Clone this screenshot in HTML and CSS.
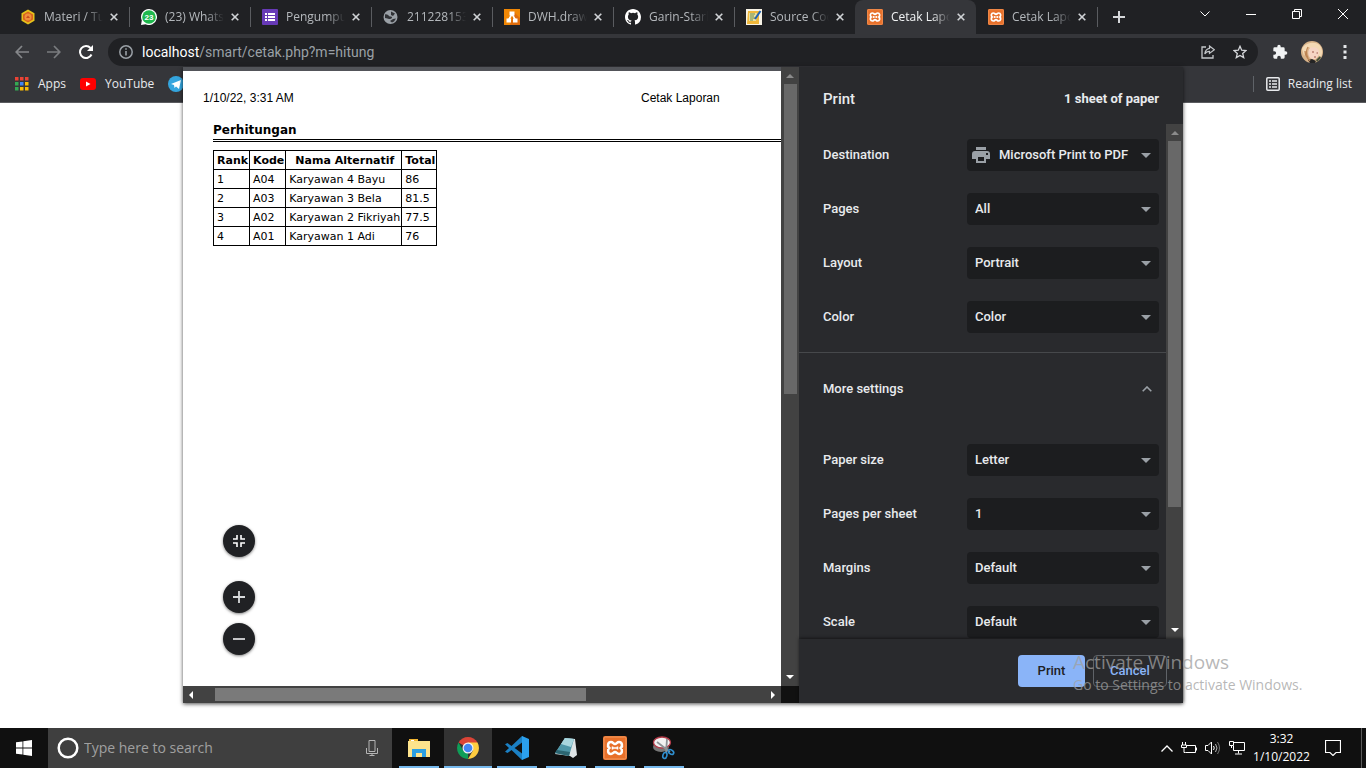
FILE: index.html
```html
<!DOCTYPE html>
<html lang="en">
<head>
<meta charset="utf-8">
<title>Cetak Laporan</title>
<link rel="stylesheet" href="styles.css">
</head>
<body>
<svg class="defs" aria-hidden="true">
  <symbol id="x" viewBox="0 0 8 8"><path d="M.7.7l6.600 6.600M7.300.7L.7 7.300" stroke="currentColor" stroke-width="1.600" fill="none"/></symbol>
  <symbol id="xampp" viewBox="0 0 24 24"><rect width="24" height="24" rx="2" fill="#e8702a"/><rect x="1" y="1" width="22" height="22" rx="1.500" fill="none" stroke="#f39a5f"/><path d="M8 6c2 0 2.500 2 4 2s2-2 4-2c3 0 4 4 1.800 6C20 14 19 18 16 18c-2 0-2.500-2-4-2s-2 2-4 2c-3 0-4-4-1.800-6C4 10 5 6 8 6z" fill="none" stroke="#fff" stroke-width="2.600"/><path d="M9.500 10.500v3M14.500 10.500v3M9.500 12h5" stroke="#fff" stroke-width="1.600"/></symbol>
  <symbol id="arrow" viewBox="0 0 10 5"><path d="M0 0h10L5 5z" fill="#9aa0a6"/></symbol>
  <symbol id="tri" viewBox="0 0 8 4"><path d="M0 4L4 0l4 4z" fill="currentColor"/></symbol>
</svg>
<div class="screen">
  <header class="tabstrip">
    <nav class="tabs" aria-label="Tabs">
      <div class="tab"><svg class="fav" viewBox="0 0 16 16"><path d="M8 .5l6.500 3.700v7.600L8 15.500l-6.500-3.700V4.200z" fill="#e6c21c"/><path d="M8 2.500l5 3v5l-5 3-5-3v-5z" fill="#d9631e"/><circle cx="8" cy="8" r="3.500" fill="#f0903c"/><path d="M6 9l2-2.500L10 9z" fill="#c84c1c"/></svg><span class="title">Materi / Tugas</span><button class="close" aria-label="Close"><svg><use href="#x"/></svg></button></div>
      <div class="tab"><svg class="fav" viewBox="0 0 16 16"><path d="M8 0a8 8 0 1 1-3.500 15.200L0 16l.8-4.500A8 8 0 0 1 8 0z" fill="#fff"/><circle cx="8" cy="8" r="6.800" fill="#1fb94e"/><text x="8" y="11" class="badge">23</text></svg><span class="title">(23) WhatsApp</span><button class="close" aria-label="Close"><svg><use href="#x"/></svg></button></div>
      <div class="tab"><svg class="fav" viewBox="0 0 16 16"><rect width="16" height="16" rx="1" fill="#673ab7"/><path d="M3 4h2v2H3zM6 4h7v2H6zM3 7h2v2H3zM6 7h7v2H6zM3 10h2v2H3zM6 10h7v2H6z" fill="#fff"/></svg><span class="title">Pengumpulan</span><button class="close" aria-label="Close"><svg><use href="#x"/></svg></button></div>
      <div class="tab"><svg class="fav" viewBox="0 0 16 16"><circle cx="7.500" cy="8" r="7" fill="#9aa0a6"/><path d="M2 5.500c2-.5 3 .5 4 1.500s3 0 3 1.500S7 10 6 10 4 9 2 9zM8 2.500l4 2-2 2.500-2-1zM7 12l3-2 3-.5-2 3-2 1z" fill="#303236"/></svg><span class="title">211228153045</span><button class="close" aria-label="Close"><svg><use href="#x"/></svg></button></div>
      <div class="tab"><svg class="fav" viewBox="0 0 16 16"><rect width="16" height="16" fill="#f08705"/><path d="M10 3l6 6v7H6z" fill="#df6c0c"/><path d="M8 5L4.500 11M8 5l3.500 6" stroke="#fff" stroke-width="1.500"/><path d="M5.500 2.500h5v4h-5zM2.500 9.500h4.500v4H2.500zM9 9.500h4.500v4H9z" fill="#fff"/></svg><span class="title">DWH.drawio</span><button class="close" aria-label="Close"><svg><use href="#x"/></svg></button></div>
      <div class="tab"><svg class="fav" viewBox="0 0 16 16"><path fill="#fff" d="M8 0C3.580 0 0 3.580 0 8c0 3.540 2.290 6.530 5.470 7.590.4.070.55-.17.55-.38v-1.490c-2.010.37-2.530-.49-2.690-.94-.09-.23-.48-.94-.82-1.130-.28-.15-.68-.52-.01-.53.63-.01 1.080.58 1.230.82.72 1.210 1.870.87 2.330.66.07-.52.28-.87.51-1.070-1.780-.2-3.640-.89-3.640-3.950 0-.87.31-1.590.82-2.150-.08-.2-.36-1.020.08-2.120 0 0 .67-.21 2.200.82a7.400 7.400 0 0 1 4 0c1.530-1.040 2.200-.82 2.200-.82.44 1.100.16 1.920.08 2.120.51.56.82 1.270.82 2.150 0 3.070-1.870 3.750-3.650 3.950.29.25.54.73.54 1.480v2.200c0 .21.15.46.55.38A8 8 0 0 0 16 8c0-4.420-3.580-8-8-8z"/></svg><span class="title">Garin-Stark/</span><button class="close" aria-label="Close"><svg><use href="#x"/></svg></button></div>
      <div class="tab"><svg class="fav" viewBox="0 0 16 16"><rect width="16" height="16" fill="#f7f3e6"/><path d="M2 2h11v13H1z" fill="#f0b83a"/><path d="M3 4h8l-1 8H3z" fill="#e8dfa0"/><path d="M4 5h5M4 7h4M4 9h5M4 11h3" stroke="#6a8c4a"/><path d="M14.500 2L9 10" stroke="#1e63b5" stroke-width="2"/></svg><span class="title">Source Code</span><button class="close" aria-label="Close"><svg><use href="#x"/></svg></button></div>
      <div class="tab active"><svg class="fav"><use href="#xampp"/></svg><span class="title">Cetak Laporan</span><button class="close" aria-label="Close"><svg><use href="#x"/></svg></button></div>
      <div class="tab"><svg class="fav"><use href="#xampp"/></svg><span class="title">Cetak Laporan</span><button class="close" aria-label="Close"><svg><use href="#x"/></svg></button></div>
    </nav>
    <button class="newtab" aria-label="New tab"><svg width="12" height="12" viewBox="0 0 12 12"><path d="M6 0v12M0 6h12" stroke="#d5d7da" stroke-width="2"/></svg></button>
    <div class="winbtns">
      <button aria-label="Search tabs"><svg width="10" height="6" viewBox="0 0 10 6"><path d="M.5.5L5 5 9.500.5" fill="none" stroke="#fff"/></svg></button>
      <button aria-label="Minimize"><svg width="10" height="10" viewBox="0 0 10 10"><path d="M0 5.500h10" stroke="#fff"/></svg></button>
      <button aria-label="Restore"><svg width="10" height="10" viewBox="0 0 10 10"><path d="M.5 2.500h7v7h-7zM2.500 2.500v-2h7v7h-2" fill="none" stroke="#fff"/></svg></button>
      <button aria-label="Close window"><svg width="10" height="10" viewBox="0 0 10 10"><path d="M0 0l10 10M10 0L0 10" stroke="#fff"/></svg></button>
    </div>
  </header>

  <div class="toolbar">
    <button class="nav" aria-label="Back"><svg width="14" height="14" viewBox="0 0 14 14"><path d="M14 7H1.500M7 1L1.200 7 7 13" fill="none" stroke="#85878a" stroke-width="1.700"/></svg></button>
    <button class="nav" aria-label="Forward"><svg width="14" height="14" viewBox="0 0 14 14"><path d="M0 7h12.500M7 1l5.800 6L7 13" fill="none" stroke="#7a7c7f" stroke-width="1.700"/></svg></button>
    <button class="nav" aria-label="Reload"><svg width="14" height="14" viewBox="0 0 14 14"><path d="M12.500 9.500A6 6 0 1 1 11.500 3" fill="none" stroke="#fff" stroke-width="2"/><path d="M14 0v6H8z" fill="#fff"/></svg></button>
    <div class="omnibox">
      <svg width="14" height="14" viewBox="0 0 14 14"><circle cx="7" cy="7" r="6.200" fill="none" stroke="#9aa0a6" stroke-width="1.500"/><path d="M7 6v4.500M7 3.300v1.500" stroke="#9aa0a6" stroke-width="1.600"/></svg>
      <div class="url" role="textbox" contenteditable="true" spellcheck="false" aria-label="Address"><b>localhost</b>/smart/cetak.php?m=hitung</div>
      <button aria-label="Share"><svg width="14" height="14" viewBox="0 0 14 14"><path d="M5 2H1v11h11v-3" fill="none" stroke="#c4c7ca" stroke-width="1.300"/><path d="M8.500 1l4.800 3.700-4.800 3.700V6.300C6.500 6.300 5 7 3.800 9c.3-3 1.700-5.200 4.700-5.700z" fill="none" stroke="#c4c7ca" stroke-width="1.200"/></svg></button>
      <button aria-label="Bookmark"><svg width="14" height="14" viewBox="0 0 14 14"><path d="M7 1.300l1.700 3.900 4.200.4-3.200 2.800 1 4.200L7 10.400l-3.700 2.200 1-4.200L1.100 5.600l4.200-.4z" fill="none" stroke="#d5d7da" stroke-width="1.300"/></svg></button>
    </div>
    <button class="ext" aria-label="Extensions"><svg width="16" height="16" viewBox="0 0 24 24"><path fill="#f1f3f4" d="M20.500 11H19V7a2 2 0 0 0-2-2h-4V3.500a2.500 2.500 0 0 0-5 0V5H4a2 2 0 0 0-2 2v3.800h1.500a2.700 2.700 0 0 1 0 5.400H2V20a2 2 0 0 0 2 2h3.800v-1.500a2.700 2.700 0 0 1 5.400 0V22H17a2 2 0 0 0 2-2v-4h1.500a2.500 2.500 0 0 0 0-5z"/></svg></button>
    <button class="avatar" aria-label="Profile"><svg width="22" height="22" viewBox="0 0 22 22"><circle cx="11" cy="11" r="11" fill="#d9b48a"/><path d="M1 8C3 1 17-1 20 6c2 4 1 9-1 12l-3-8-9-4-4 9z" fill="#f3d9b4"/><path d="M9 7c5-2 10 1 9 6-1 4-4 6-7 5-4-1-5-8-2-11z" fill="#f6d5c4"/><path d="M11 11h2M15.500 12h1.500M13 16h2" stroke="#9d584b"/><path d="M7 19l4-1 4 2-1 2H9z" fill="#242424"/><path d="M15 19l4-4 1 2-4 4z" fill="#46503a"/><path d="M4 10c0 5 3 8 5 10M7 6c-2 3-2 7 0 11" fill="none" stroke="#bd8353" stroke-width="1.200"/></svg></button>
    <button class="menu" aria-label="Menu"><svg width="4" height="14" viewBox="0 0 4 14"><path d="M.5 0h3v3h-3zM.5 5.500h3v3h-3zM.5 11h3v3h-3z" fill="#e4e6e8"/></svg></button>
  </div>

  <nav class="bookmarks" aria-label="Bookmarks">
    <a href="#"><svg width="14" height="14" viewBox="0 0 14 14"><path d="M0 0h3.500v3.500H0zM5 0h3.500v3.500H5zM10 0h3.500v3.500H10z" fill="#ea4335"/><path d="M0 5h3.500v3.500H0zM0 10h3.500v3.500H0z" fill="#34a853"/><path d="M5 5h3.500v3.500H5z" fill="#4285f4"/><path d="M10 5h3.500v3.500H10zM5 10h3.500v3.500H5zM10 10h3.500v3.500H10z" fill="#fbbc05"/></svg>Apps</a>
    <a href="#"><svg width="16" height="12" viewBox="0 0 16 12"><rect width="16" height="12" rx="3" fill="#f00"/><path d="M6 3.500L10.500 6 6 8.500z" fill="#fff"/></svg>YouTube</a>
    <a href="#" aria-label="Telegram"><svg width="16" height="16" viewBox="0 0 16 16"><circle cx="8" cy="8" r="8" fill="#34a5de"/><path d="M3 8l10-4-2 9-3-2.500L6.500 12 6 9z" fill="#fff"/></svg></a>
    <a class="reading" href="#"><svg width="14" height="14" viewBox="0 0 14 14"><rect x=".8" y=".8" width="12.400" height="12.400" rx="1" fill="none" stroke="#e8eaed" stroke-width="1.500"/><path d="M3 4h2M6 4h5M3 7h2M6 7h5M3 10h2M6 10h5" stroke="#e8eaed" stroke-width="1.500"/></svg>Reading list</a>
  </nav>

  <main class="page"></main>

  <section class="dialog" role="dialog" aria-label="Print">
    <div class="preview">
      <div class="sheet">
        <div class="runhead"><span class="date">1/10/22, 3:31 AM</span><span>Cetak Laporan</span></div>
        <h1>Perhitungan</h1>
        <table>
          <thead><tr><th>Rank</th><th>Kode</th><th>Nama Alternatif</th><th>Total</th></tr></thead>
          <tbody>
            <tr><td>1</td><td>A04</td><td>Karyawan 4 Bayu</td><td>86</td></tr>
            <tr><td>2</td><td>A03</td><td>Karyawan 3 Bela</td><td>81.5</td></tr>
            <tr><td>3</td><td>A02</td><td>Karyawan 2 Fikriyah</td><td>77.5</td></tr>
            <tr><td>4</td><td>A01</td><td>Karyawan 1 Adi</td><td>76</td></tr>
          </tbody>
        </table>
        <div class="zoom">
          <button class="fit" aria-label="Fit to page"><svg width="12" height="12" viewBox="0 0 12 12"><path d="M0 4h4V0M8 0v4h4M0 8h4v4M12 8H8v4" fill="none" stroke="#fff" stroke-width="1.600"/></svg></button>
          <button aria-label="Zoom in"><svg width="12" height="12" viewBox="0 0 12 12"><path d="M6 0v12M0 6h12" stroke="#d8dadc" stroke-width="1.800"/></svg></button>
          <button aria-label="Zoom out"><svg width="12" height="12" viewBox="0 0 12 12"><path d="M0 6h12" stroke="#d8dadc" stroke-width="1.800"/></svg></button>
        </div>
      </div>
      <div class="vbar"><svg class="up"><use href="#tri"/></svg><div class="track"><i class="vthumb"></i></div><svg class="down"><use href="#tri"/></svg></div>
      <div class="hbar"><svg class="left"><use href="#tri"/></svg><div class="htrack"><i class="hthumb"></i></div><svg class="right"><use href="#tri"/></svg></div>
      <div class="corner"></div>
    </div>
    <form class="settings">
      <div class="head"><h2>Print</h2><strong>1 sheet of paper</strong></div>
      <div class="scroller">
        <div class="fields">
          <div class="group">
            <div class="row"><label for="dest">Destination</label><div class="pick printer"><select id="dest"><option>Microsoft Print to PDF</option></select><svg class="pr" viewBox="0 0 18 16"><path d="M4 0h10v3H4z" fill="#9aa0a6"/><path fill-rule="evenodd" d="M3 4h12a3 3 0 0 1 3 3v5h-4v4H4v-4H0V7a3 3 0 0 1 3-3zm3 6v4h6v-4zm8-4v2h2V6z" fill="#9aa0a6"/></svg><svg class="arr"><use href="#arrow"/></svg></div></div>
            <div class="row"><label for="pages">Pages</label><div class="pick"><select id="pages"><option>All</option></select><svg class="arr"><use href="#arrow"/></svg></div></div>
            <div class="row"><label for="layout">Layout</label><div class="pick"><select id="layout"><option>Portrait</option></select><svg class="arr"><use href="#arrow"/></svg></div></div>
            <div class="row"><label for="color">Color</label><div class="pick"><select id="color"><option>Color</option></select><svg class="arr"><use href="#arrow"/></svg></div></div>
          </div>
          <button type="button" class="more" aria-expanded="true">More settings<svg width="10" height="6" viewBox="0 0 10 6"><path d="M.7 5.300L5 1l4.300 4.300" fill="none" stroke="#9aa0a6" stroke-width="1.600"/></svg></button>
          <div class="group second">
            <div class="row"><label for="paper">Paper size</label><div class="pick"><select id="paper"><option>Letter</option></select><svg class="arr"><use href="#arrow"/></svg></div></div>
            <div class="row"><label for="pps">Pages per sheet</label><div class="pick"><select id="pps"><option>1</option></select><svg class="arr"><use href="#arrow"/></svg></div></div>
            <div class="row"><label for="margins">Margins</label><div class="pick"><select id="margins"><option>Default</option></select><svg class="arr"><use href="#arrow"/></svg></div></div>
            <div class="row"><label for="scale">Scale</label><div class="pick"><select id="scale"><option>Default</option></select><svg class="arr"><use href="#arrow"/></svg></div></div>
          </div>
        </div>
        <div class="vbar side"><svg class="up"><use href="#tri"/></svg><div class="track"><i class="sthumb"></i></div><svg class="down"><use href="#tri"/></svg></div>
      </div>
      <div class="foot"><button type="button" class="print">Print</button><button type="button" class="cancel">Cancel</button></div>
    </form>
  </section>

  <div class="watermark"><p class="wm1">Activate Windows</p><p class="wm2">Go to Settings to activate Windows.</p></div>

  <footer class="taskbar">
    <button class="start" aria-label="Start"><svg width="16" height="16" viewBox="0 0 16 16"><path d="M0 2.300L6.500 1.400v6.200H0zM7.300 1.300L16 0v7.600H7.300zM0 8.400h6.500v6.200L0 13.700zM7.300 8.400H16V16l-8.700-1.300z" fill="#fff"/></svg></button>
    <div class="search">
      <svg width="22" height="22" viewBox="0 0 22 22"><circle cx="11" cy="11" r="9.300" fill="none" stroke="#fff" stroke-width="2.500"/></svg>
      <input type="text" placeholder="Type here to search" aria-label="Type here to search">
      <svg width="12" height="16" viewBox="0 0 12 16"><path d="M3 .5h6v11H3zM.5 8v5.500h11V8M6 13.500V16M3.500 15.500h5" fill="none" stroke="#b5b5b5"/></svg>
    </div>
    <div class="apps">
      <button class="app" aria-label="File Explorer"><svg width="24" height="24" viewBox="0 0 24 24"><path d="M2 3h9v3H2z" fill="#f2b632"/><path d="M1 5h22v16H1z" fill="#fde38c"/><path d="M4 4h3v1H4z" fill="#fff"/><path d="M5 13h14v8h-4v-4H9v4H5z" fill="#2b9fe2"/></svg></button>
      <button class="app on" aria-label="Chrome"><svg width="24" height="24" viewBox="0 0 24 24"><path d="M12 12L2.500 6.500A11 11 0 0 1 21.500 6.500z" fill="#db4437"/><path d="M2.500 6.500L7.300 14.800 12 17l0 6A11 11 0 0 1 2.500 6.500z" fill="#0f9d58"/><path d="M12 6.500h9.500A11 11 0 0 1 12 23l5-8.500z" fill="#ffcd40"/><circle cx="12" cy="12" r="5.500" fill="#f1f1f1"/><circle cx="12" cy="12" r="4.300" fill="#4285f4"/></svg></button>
      <button class="app" aria-label="Visual Studio Code"><svg width="24" height="24" viewBox="0 0 24 24"><path d="M17 0L6.500 10 2.500 7 0 8.200 4 12l-4 3.800L2.500 17l4-3L17 24l1-1V1z" fill="#1b80c4"/><path d="M17 0l7 3v18l-7 3zM17 6.500L9.500 12l7.500 5.500z" fill="#2ba0ee"/><path d="M17 6.500v11L9.500 12z" fill="#101010"/></svg></button>
      <button class="app" aria-label="Notepad"><svg width="24" height="24" viewBox="0 0 24 24"><path d="M11 2l10 1 2 16-4 3-3-2-15-2z" fill="#dfe4e6"/><path d="M11 2l9 1-5 17L1 17z" fill="#4f97a8"/><path d="M11 2l9 1-3 8L7 8z" fill="#a9d6de"/><path d="M3 14l13 2-1 4-14-3z" fill="#2c6672"/></svg></button>
      <button class="app" aria-label="XAMPP"><svg width="24" height="24"><use href="#xampp"/></svg></button>
      <button class="app" aria-label="Snipping Tool"><svg width="24" height="24" viewBox="0 0 24 24"><ellipse cx="9" cy="11" rx="8" ry="5" fill="#777"/><ellipse cx="10" cy="6.500" rx="8.500" ry="5.500" fill="#f2f2f2" stroke="#b23a48" stroke-width="1.300"/><path d="M5 6l13 10M15 3l-1 14" stroke="#8c9296" stroke-width="1.800"/><ellipse cx="13" cy="19.500" rx="2" ry="3" fill="none" stroke="#2f8fd0" stroke-width="1.600" transform="rotate(15 13 19)"/><ellipse cx="19" cy="16" rx="3" ry="2" fill="none" stroke="#2f8fd0" stroke-width="1.600" transform="rotate(35 19 16)"/></svg></button>
    </div>
    <div class="tray">
      <svg width="12" height="7" viewBox="0 0 12 7"><path d="M.5 6.500L6 1l5.500 5.500" fill="none" stroke="#fff" stroke-width="1.300"/></svg>
      <svg width="16" height="12" viewBox="0 0 16 12"><path d="M5.500 3.500h9v7H4.500M15.500 5.500v3M1.500 0v3M4.500 0v3M.5 3v2.500h5V3zM3 5.500v5h1.500" fill="none" stroke="#fff"/></svg>
      <svg width="16" height="14" viewBox="0 0 16 14"><path d="M.5 4.500H3l3.500-3.500v12L3 9.500H.5zM8.500 5q1.500 2 0 4" fill="none" stroke="#fff"/><path d="M10.500 3q3 4 0 8" fill="none" stroke="#bbb"/><path d="M12.500 1q4 6 0 12" fill="none" stroke="#777"/></svg>
      <svg width="16" height="14" viewBox="0 0 16 14"><path d="M5 1.500h10.500v8H4.500V5M.5.5h4v4h-4zM9.500 9.500v3M6 13h7M2.500 4.500V7" fill="none" stroke="#fff"/></svg>
      <time class="clock"><span>3:32</span><span>1/10/2022</span></time>
      <svg width="16" height="16" viewBox="0 0 16 16"><path d="M.5.500h15v12H11l-3 3-3-3H.5z" fill="none" stroke="#fff" stroke-width="1.200"/></svg>
      <i class="desk"></i>
    </div>
  </footer>
</div>
</body>
</html>
```

FILE: styles.css
```css
* { box-sizing: border-box; }
body { margin: 0; background: #fff; }
button { border: 0; padding: 0; background: none; color: inherit; font: inherit; display: flex; align-items: center; justify-content: center; }
.defs { position: absolute; width: 0; height: 0; }
.screen { position: relative; display: flex; flex-direction: column; height: 100vh; overflow: hidden; font: 12px/16px "Open Sans", "Noto Sans", sans-serif; color: #e8eaed; }

/* Tab strip */
.tabstrip { display: flex; align-items: stretch; height: 34px; background: #202124; padding-left: 8px; }
.tabs { display: flex; }
.tab { display: flex; align-items: center; width: 121px; padding: 0 7px 0 12px; color: #b4b8bc; position: relative; }
.tab::after { content: ""; position: absolute; right: -1px; top: 7px; height: 20px; width: 1px; background: #5a5c60; }
.tab:nth-child(7)::after, .tab.active::after { display: none; }
.tab.active { background: #35363a; border-radius: 8px 8px 0 0; color: #f1f3f4; }
.fav { width: 16px; height: 16px; flex: none; }
.badge { font: bold 8px "Liberation Sans", sans-serif; fill: #fff; text-anchor: middle; }
.title { flex: 1; margin-left: 8px; overflow: hidden; white-space: nowrap; mask-image: linear-gradient(90deg, #000 70%, transparent 100%); }
.close { width: 16px; height: 16px; margin-left: 3px; color: #d0d3d6; }
.close svg { width: 8px; height: 8px; }
.newtab { width: 44px; }
.winbtns { display: flex; margin-left: auto; height: 28px; }
.winbtns button { width: 46px; }

/* Address row */
.toolbar { display: flex; align-items: center; height: 36px; background: #35363a; padding: 0 19px 0 6px; }
.nav { width: 32px; height: 32px; }
.omnibox { flex: 1; display: flex; align-items: center; height: 28px; margin-left: 6px; padding: 0 11px; border-radius: 14px; background: #202124; }
.omnibox button { width: 14px; height: 14px; margin-left: 18px; }
.url { flex: 1; margin-left: 9px; font: 14px/20px Roboto, sans-serif; color: #9aa0a6; outline: 0; }
.url b { font-weight: 400; color: #fff; }
.ext { margin-left: 14px; }
.avatar { margin-left: 13px; }
.menu { margin-left: 20px; }

/* Bookmarks */
.bookmarks { display: flex; align-items: center; gap: 14px; height: 33px; padding: 0 14px 5px 15px; background: #35363a; border-bottom: 1px solid #5a5b5f; }
.bookmarks a { display: flex; align-items: center; gap: 9px; color: #e8eaed; text-decoration: none; }
.bookmarks .reading { gap: 8px; margin-left: auto; padding-left: 12px; border-left: 1px solid #5f6368; }
.page { flex: 1; background: #fff; }

/* Print dialog */
.dialog { position: absolute; top: 67px; bottom: 65px; left: 50%; width: 1000px; margin-left: -500px; display: flex; background: #292a2d; box-shadow: 0 1px 4px rgba(0, 0, 0, .7); }
.preview { flex: 1; display: grid; grid-template: 1fr 17px / 1fr 18px; }
.sheet { position: relative; background: #fff; border-top: 4px solid #525459; color: #000; padding-top: 19px; overflow: hidden; font: 11px/14px "DejaVu Sans", sans-serif; }
.runhead { display: flex; padding-left: 20px; font: 12px/16px "Liberation Sans", Arial, sans-serif; }
.date { flex: 0 0 438px; }
.sheet h1 { margin: 17px 0 8px 30px; padding-bottom: 2px; border-bottom: 3px double #000; font: bold 12px/14px "DejaVu Sans", sans-serif; }
.sheet table { margin-left: 30px; border-collapse: collapse; }
.sheet th, .sheet td { border: 1px solid #000; padding: 3px 1px 1px 3px; white-space: nowrap; }
.zoom { position: absolute; left: 40px; bottom: 31px; display: grid; gap: 10px; }
.zoom button { width: 32px; height: 32px; border-radius: 50%; background: #202124; box-shadow: 0 1px 3px rgba(0, 0, 0, .5); }
.zoom .fit { margin-bottom: 14px; }

/* Scrollbars */
.vbar { display: flex; flex-direction: column; align-items: center; background: #424242; color: #8b8b8b; }
.vbar svg, .hbar svg { width: 8px; height: 4px; flex: none; }
.up { margin: 7px 0 6px; }
.down { margin: 6px 0 7px; color: #fff; transform: rotate(180deg); }
.track { flex: 1; width: 13px; }
.vthumb, .hthumb, .sthumb { display: block; background: #686868; }
.vthumb { height: 53%; }
.sthumb { height: 76%; }
.hbar { display: flex; align-items: center; background: #424242; color: #fff; }
.left { transform: rotate(-90deg); margin-left: 4px; }
.right { transform: rotate(90deg); margin-right: 4px; }
.htrack { flex: 1; height: 13px; padding-left: 20px; }
.hthumb { height: 13px; width: 67%; background: #7a7a7a; }
.corner { background: #111; }

/* Settings pane */
.settings { width: 384px; display: flex; flex-direction: column; font: 500 13px/20px Roboto, sans-serif; color: #e8eaed; }
.head { display: flex; align-items: center; justify-content: space-between; height: 57px; padding: 6px 24px 0; }
.head h2 { margin: 0; font: 500 15px/20px Roboto, sans-serif; }
.head strong { font-weight: 700; font-size: 13px; }
.scroller { flex: 1; min-height: 0; display: flex; overflow: hidden; }
.fields { flex: 1; }
.side { width: 17px; }
.group { padding: 4px 7px 8px 24px; border-bottom: 1px solid #46484b; }
.second { padding-top: 8px; border: 0; }
.row { display: flex; align-items: center; justify-content: space-between; height: 54px; }
.pick { display: grid; align-items: center; width: 192px; }
.pick > * { grid-area: 1 / 1; }
.pick select { appearance: none; width: 100%; height: 32px; padding: 0 24px 0 8px; border: 0; border-radius: 4px; background: #1c1d1f; color: #e8eaed; font: inherit; }
.pick.printer select { padding-left: 32px; }
.arr { justify-self: end; width: 10px; height: 5px; margin-right: 8px; pointer-events: none; }
.pr { width: 18px; height: 16px; margin-left: 5px; pointer-events: none; }
.more { width: 100%; height: 72px; padding: 0 14px 0 24px; justify-content: space-between; }
.foot { position: relative; display: flex; justify-content: flex-end; gap: 8px; height: 64px; padding: 16px; background: #292a2d; box-shadow: 0 -1px 3px rgba(0, 0, 0, .5); }
.foot button { height: 32px; border-radius: 4px; }
.print { width: 67px; background: #8ab4f8; color: #202124; }
.cancel { width: 74px; border: 1px solid #5f6368; color: #8ab4f8; }

.watermark { position: absolute; right: 56px; bottom: 73px; width: 237px; color: rgba(160, 160, 160, .75); pointer-events: none; white-space: nowrap; }
.watermark p { margin: 0; }
.wm1 { font-size: 19px; line-height: 26px; }
.wm2 { font-size: 14px; line-height: 20px; }

/* Taskbar */
.taskbar { display: flex; height: 40px; background: #101010; color: #fff; }
.start { width: 48px; }
.search { display: flex; align-items: center; width: 344px; padding: 0 14px 0 9px; background: #3f3f3f; }
.search input { flex: 1; min-width: 0; border: 0; padding: 0 0 0 5px; background: none; font: 14px/20px "Open Sans", sans-serif; color: #fff; outline: 0; }
.search input::placeholder { color: #a0a0a0; opacity: 1; }
.apps { display: flex; gap: 1px; margin-left: 3px; }
.app { width: 48px; position: relative; }
.app::after { content: ""; position: absolute; left: 4px; right: 4px; bottom: 0; height: 2px; background: #76b9ed; }
.app.on { background: #333; }
.app.on::after { left: 0; right: 0; }
.tray { display: flex; align-items: center; gap: 8px; margin-left: auto; }
.clock { display: flex; flex-direction: column; align-items: center; line-height: 18px; width: 57px; }
.clock + svg { margin: 0 12px 0 7px; }
.desk { width: 5px; align-self: stretch; border-left: 1px solid #5a5a5a; }
```
